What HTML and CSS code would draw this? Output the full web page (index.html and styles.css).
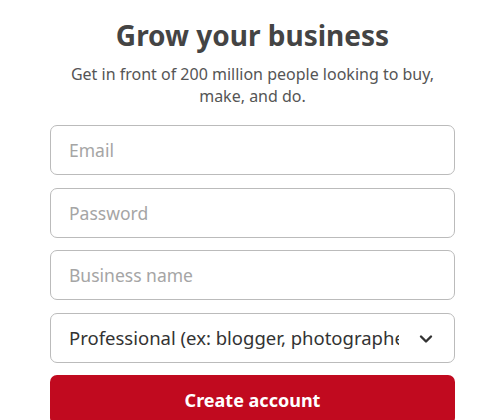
FILE: index.html
```html
<!DOCTYPE html>
<html lang="en">
<head>
  <meta charset="UTF-8">
  <title>Grow your business</title>
  <link rel="stylesheet" href="styles.css">
</head>
<body>

  <div class="signup">
    <h1>Grow your business</h1>
    <p class="lead">Get in front of 200 million people looking to buy, make, and do.</p>

    <form class="form">
      <input type="email" class="field" placeholder="Email">
      <input type="password" class="field" placeholder="Password">
      <input type="text" class="field" placeholder="Business name">
      <div class="select-wrap">
        <select class="field select">
          <option>Professional (ex: blogger, photographer, designer)</option>
          <option>Local business</option>
          <option>Brand</option>
        </select>
        <svg class="chevron" width="14" height="10" viewBox="0 0 14 10">
          <path d="M2 2.5 L7 7.5 L12 2.5" fill="none" stroke="#333" stroke-width="2.4" stroke-linecap="round" stroke-linejoin="round"/>
        </svg>
      </div>
      <button type="button" class="btn-create">Create account</button>
    </form>
  </div>

</body>
</html>
```

FILE: styles.css
```css
body {
  margin: 0;
  background: #fff;
  font-family: 'Noto Sans', 'Open Sans', sans-serif;
  color: #333;
}
.signup {
  width: 405px;
  margin: 0 0 0 50px;
  padding-top: 15px;
  text-align: center;
}
h1 {
  margin: 0;
  font-size: 28px;
  line-height: 40px;
  font-weight: bold;
  color: #444;
}
.lead {
  margin: 8px 0 0;
  padding: 0 8px;
  font-size: 16px;
  line-height: 22px;
  color: #555;
}
.form {
  display: flex;
  flex-direction: column;
  gap: 12.5px;
  margin-top: 18px;
}
.field {
  box-sizing: border-box;
  width: 100%;
  height: 50px;
  padding: 0 18px;
  border: 1px solid #bbb;
  border-radius: 7px;
  font-family: inherit;
  font-size: 17.5px;
  color: #333;
  background: #fff;
  outline: none;
}
.field::placeholder {
  color: #a5a5a5;
}
.select-wrap {
  position: relative;
}
.select {
  appearance: none;
  -webkit-appearance: none;
  padding-right: 55px;
  font-size: 18.5px;
}
.chevron {
  position: absolute;
  right: 22px;
  top: 21px;
  pointer-events: none;
}
.btn-create {
  height: 50px;
  border: none;
  border-radius: 7px;
  background: #c10a1f;
  color: #fff;
  font-family: inherit;
  font-size: 18px;
  font-weight: bold;
}
```
